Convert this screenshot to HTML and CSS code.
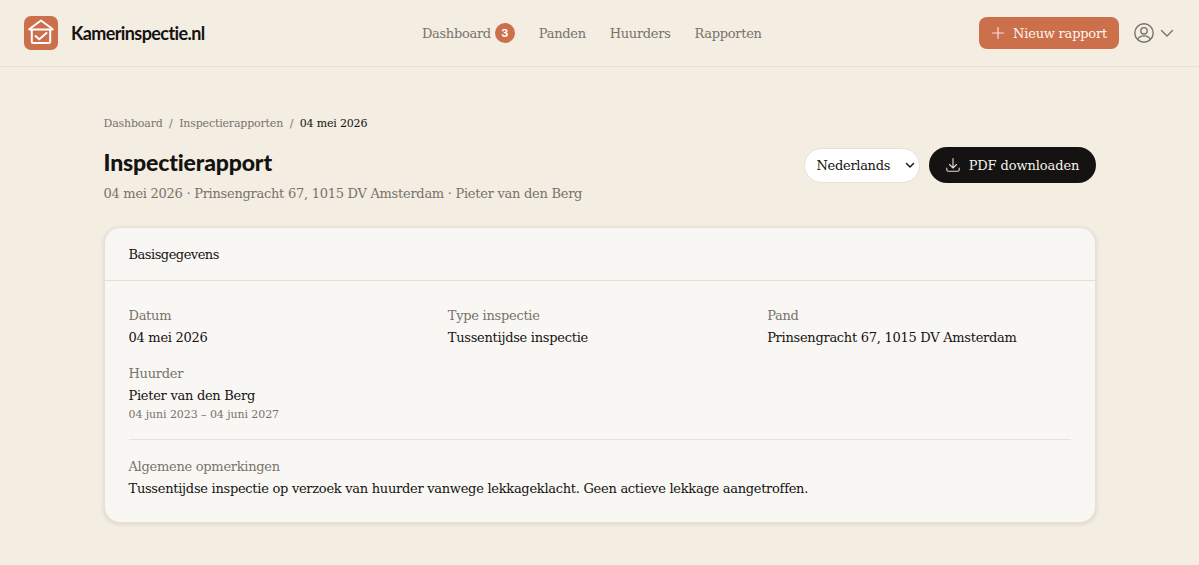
FILE: index.html
```html
<!DOCTYPE html>
<html lang="nl">
<head>
<meta charset="utf-8">
<title>Inspectierapport</title>
<link rel="stylesheet" href="styles.css">
</head>
<body>
<header class="topbar">
  <a class="brand">
    <span class="brand-mark">
      <svg width="34" height="34" viewBox="0 0 34 34" fill="none" stroke="#fff" stroke-width="2" stroke-linecap="round" stroke-linejoin="round"><path d="M5.500 13 17 4.500 28.500 13"/><path d="M5.500 13.500h23"/><path d="M7.800 14v11.500a1.500 1.500 0 0 0 1.500 1.500h15.400a1.500 1.500 0 0 0 1.500-1.500V14"/><path d="m11.500 20 3.800 3.200 7.200-6.200"/></svg>
    </span>
    <span class="brand-name">Kamerinspectie.nl</span>
  </a>
  <nav class="nav">
    <a class="nav-link nav-dash">Dashboard <span class="badge">3</span></a>
    <a class="nav-link">Panden</a>
    <a class="nav-link">Huurders</a>
    <a class="nav-link">Rapporten</a>
  </nav>
  <div class="actions">
    <button class="btn-new">
      <svg width="14" height="14" viewBox="0 0 14 14" fill="none" stroke="#f6e3d8" stroke-width="1.200" stroke-linecap="round"><path d="M7 1.500v11M1.500 7h11"/></svg>
      Nieuw rapport
    </button>
    <span class="user">
      <svg width="22" height="22" viewBox="0 0 22 22" fill="none" stroke="#77736b" stroke-width="1.400"><circle cx="11" cy="11" r="9.200"/><circle cx="11" cy="8.800" r="3.200"/><path d="M4.800 17.600c1-2.500 3.400-3.700 6.200-3.700s5.200 1.200 6.200 3.700"/></svg>
      <svg width="14" height="14" viewBox="0 0 14 14" fill="none" stroke="#77736b" stroke-width="1.400" stroke-linecap="round" stroke-linejoin="round"><path d="m1.500 4.500 5.500 5.500 5.500-5.500"/></svg>
    </span>
  </div>
</header>
<main class="page">
  <div class="crumbs">
    <span class="crumb">Dashboard</span><span class="sep">/</span><span class="crumb">Inspectierapporten</span><span class="sep">/</span><span class="crumb-now">04 mei 2026</span>
  </div>
  <div class="title-row">
    <div>
      <h1 class="title">Inspectierapport</h1>
      <p class="subtitle">04 mei 2026 · Prinsengracht 67, 1015 DV Amsterdam · Pieter van den Berg</p>
    </div>
    <div class="title-actions">
      <span class="lang">Nederlands
        <svg width="10" height="10" viewBox="0 0 10 10" fill="none" stroke="#222" stroke-width="1.600" stroke-linecap="round" stroke-linejoin="round"><path d="m1.500 3.500 3.500 3.500 3.500-3.500"/></svg>
      </span>
      <button class="btn-pdf">
        <svg width="16" height="16" viewBox="0 0 16 16" fill="none" stroke="#ddd" stroke-width="1.100" stroke-linecap="round" stroke-linejoin="round"><path d="M8 1.500v9M4.500 7.500 8 11l3.500-3.500"/><path d="M1.800 11v1.700c0 .9.700 1.500 1.500 1.500h9.400c.8 0 1.500-.6 1.500-1.500V11"/></svg>
        PDF downloaden
      </button>
    </div>
  </div>
  <section class="card">
    <div class="card-head">Basisgegevens</div>
    <div class="card-body">
      <div class="grid">
        <div><div class="label">Datum</div><div class="value">04 mei 2026</div></div>
        <div><div class="label">Type inspectie</div><div class="value">Tussentijdse inspectie</div></div>
        <div><div class="label">Pand</div><div class="value">Prinsengracht 67, 1015 DV Amsterdam</div></div>
        <div><div class="label">Huurder</div><div class="value">Pieter van den Berg</div><div class="note">04 juni 2023 – 04 juni 2027</div></div>
      </div>
      <div class="remarks">
        <div class="label">Algemene opmerkingen</div>
        <div class="value">Tussentijdse inspectie op verzoek van huurder vanwege lekkageklacht. Geen actieve lekkage aangetroffen.</div>
      </div>
    </div>
  </section>
</main>
</body>
</html>
```
FILE: styles.css
```css
* { box-sizing: border-box; }
html, body { margin: 0; height: 100%; }
body {
  background: #f3ede2;
  color: #141311;
  font-family: "DejaVu Serif", "Liberation Serif", serif;
  overflow: hidden;
}
.topbar {
  height: 67px;
  border-bottom: 1px solid #e8e0d4;
  padding: 0 24px;
  display: flex;
  justify-content: space-between;
  align-items: center;
}
.brand { display: flex; align-items: center; gap: 13px; }
.brand-mark {
  width: 34px; height: 34px; border-radius: 7px;
  background: #cc6f4b;
  display: flex;
}
.brand-name {
  font-family: "Lato", sans-serif;
  font-weight: 700;
  font-size: 18px;
  letter-spacing: -0.6px;
  color: #141311;
}
.nav { display: flex; gap: 24px; align-items: center; }
.nav-link { font-size: 13px; letter-spacing: -0.3px; color: #77736b; white-space: nowrap; }
.nav-dash { display: flex; align-items: center; gap: 4px; }
.badge {
  width: 20px; height: 20px; border-radius: 50%;
  background: #cc6f4b; color: #fff;
  font-family: "Inter", sans-serif; font-size: 11px; font-weight: 700;
  letter-spacing: 0;
  display: flex; align-items: center; justify-content: center;
}
.actions { display: flex; justify-content: flex-end; align-items: center; gap: 14px; }
.btn-new {
  height: 32px; width: 140px; border: 0; border-radius: 8px;
  background: #cc6f4b; color: #fdf6f0;
  font-family: inherit; font-size: 13px; letter-spacing: -0.22px; font-weight: 500;
  display: flex; align-items: center; justify-content: center; gap: 8px;
  padding: 0;
}
.user { display: flex; align-items: center; gap: 5px; margin-right: 1px; }
.page { width: 992px; margin: 0 auto; padding-top: 49px; }
.crumbs { display: flex; align-items: center; font-size: 11px; letter-spacing: -0.17px; line-height: 16px; }
.crumb { color: #77736b; }
.crumb-now { color: #141311; }
.sep { color: #77736b; margin: 0 6.500px; }
.title-row { display: flex; justify-content: space-between; align-items: flex-start; margin-top: 14px; }
.title {
  margin: 0;
  font-family: "Lato", sans-serif;
  font-weight: 900;
  font-size: 23px;
  line-height: 32px;
  letter-spacing: -0.15px;
  color: #141311;
}
.subtitle { margin: 6px 0 0; font-size: 13px; letter-spacing: -0.27px; line-height: 20px; color: #77736b; }
.title-actions { display: flex; align-items: center; gap: 9px; margin-top: 1px; }
.lang {
  width: 116px; height: 35px; border: 1px solid #e8e0d4; border-radius: 18px;
  background: #fff;
  font-size: 13px; letter-spacing: -0.3px;
  display: flex; align-items: center; justify-content: space-between;
  padding: 0 4px 0 12px;
}
.btn-pdf {
  width: 167px; height: 36px; border: 0; border-radius: 18px;
  background: #141311; color: #f5f2ec;
  font-family: inherit; font-size: 13px; letter-spacing: -0.1px;
  display: flex; align-items: center; justify-content: center; gap: 8px;
  padding: 0;
}
.card {
  margin-top: 23px;
  background: #f9f7f3;
  border: 1px solid #e8e0d4;
  border-radius: 16px;
  box-shadow: 0 1px 4px rgba(60, 45, 30, 0.14);
}
.card-head {
  height: 53px; border-bottom: 1px solid #ebdccd;
  padding: 0 24px;
  display: flex; align-items: center;
  font-size: 13px; letter-spacing: -0.5px;
}
.card-body { padding: 25px 24px 23px; }
.grid { display: grid; grid-template-columns: repeat(3, 1fr); column-gap: 16px; row-gap: 16px; }
.label { font-size: 13px; letter-spacing: -0.28px; line-height: 20px; color: #77736b; }
.value { font-size: 13px; letter-spacing: -0.28px; line-height: 20px; margin-top: 2px; color: #141311; }
.note { font-size: 11px; letter-spacing: -0.08px; line-height: 16px; margin-top: 1px; color: #77736b; }
.remarks { margin-top: 16px; padding-top: 17px; border-top: 1px solid #e5e2dc; }
```
